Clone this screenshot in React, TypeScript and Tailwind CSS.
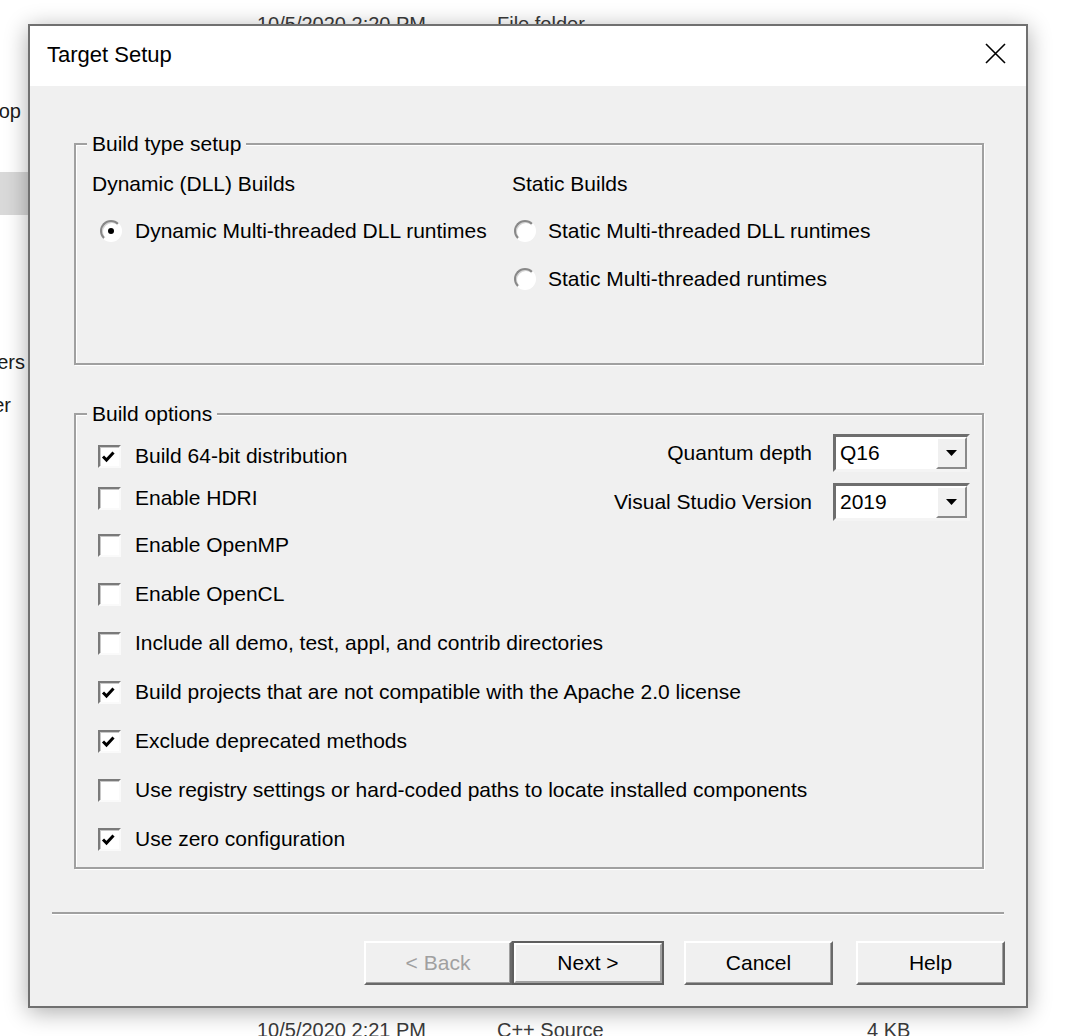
import React from 'react';

const sans = "font-['Liberation_Sans',Arial,sans-serif]";

function Radio({ checked }: { checked?: boolean }) {
  return (
    <span className="flex h-[22px] w-[22px] shrink-0 items-center justify-center rounded-full border-2 border-t-[#888888] border-l-[#888888] border-r-white border-b-white bg-white shadow-[inset_1px_1px_0_#d4d4d4]">
      {checked && <span className="h-[6px] w-[6px] rounded-full bg-black" />}
    </span>
  );
}

function Checkbox({ checked }: { checked?: boolean }) {
  return (
    <span className="flex h-[23px] w-[23px] shrink-0 items-center justify-center border-2 border-t-[#7a7a7a] border-l-[#7a7a7a] border-r-[#fafafa] border-b-[#fafafa] bg-white shadow-[inset_1px_1px_0_#c8c8c8]">
      {checked && (
        <svg width="15" height="13" viewBox="0 0 15 13" className="-ml-[2px]">
          <path d="M2 6.5 L5.5 10 L12.5 2.5" stroke="#000" strokeWidth="3" fill="none" />
        </svg>
      )}
    </span>
  );
}

function Group({ title, className, children }: { title: string; className: string; children: React.ReactNode }) {
  return (
    <div className={`relative border-2 border-[#a0a0a0] shadow-[1px_1px_0_#fff,inset_1px_1px_0_#fff] ${className}`}>
      <span className="absolute -top-[13px] left-[11px] bg-[#f0f0f0] px-[5px] leading-[24px]">{title}</span>
      {children}
    </div>
  );
}

function Select({ value }: { value: string }) {
  return (
    <div className="flex h-[38px] w-[137px] border-[3px] border-t-[#6e6e6e] border-l-[#6e6e6e] border-r-[#f4f4f4] border-b-[#f4f4f4] bg-white">
      <span className="flex-1 pl-[4px] leading-[32px]">{value}</span>
      <span className="flex w-[31px] items-center justify-center border-2 border-t-white border-l-white border-r-[#8a8a8a] border-b-[#8a8a8a] bg-[#f0f0f0]">
        <svg width="11" height="6" viewBox="0 0 11 6">
          <path d="M0 0 H11 L5.5 6 Z" fill="#000" />
        </svg>
      </span>
    </div>
  );
}

export default function App() {
  const options = [
    { label: 'Build 64-bit distribution', checked: true },
    { label: 'Enable HDRI', checked: false },
    { label: 'Enable OpenMP', checked: false },
    { label: 'Enable OpenCL', checked: false },
    { label: 'Include all demo, test, appl, and contrib directories', checked: false },
    { label: 'Build projects that are not compatible with the Apache 2.0 license', checked: true },
    { label: 'Exclude deprecated methods', checked: true },
    { label: 'Use registry settings or hard-coded paths to locate installed components', checked: false },
    { label: 'Use zero configuration', checked: true },
  ];

  const row = (o: { label: string; checked: boolean }) => (
    <div key={o.label} className="flex h-[24px] items-center gap-[14px]">
      <Checkbox checked={o.checked} />
      <span className="whitespace-nowrap leading-[24px]">{o.label}</span>
    </div>
  );

  return (
    <div className={`relative h-[1036px] w-[1074px] overflow-hidden bg-white text-[21px] text-black ${sans}`}>
      {/* Explorer window behind the dialog */}
      <div className="absolute left-0 top-[13px] flex text-[20px] leading-[22px] text-[#3a3a3a]">
        <span className="ml-[257px] w-[240px]">10/5/2020 2:20 PM</span>
        <span>File folder</span>
      </div>
      <div className="absolute left-0 top-[1019px] flex text-[20px] leading-[22px] text-[#3a3a3a]">
        <span className="ml-[257px] w-[240px]">10/5/2020 2:21 PM</span>
        <span className="w-[370px]">C++ Source</span>
        <span>4 KB</span>
      </div>
      <div className="absolute left-0 top-0 flex h-full w-[28px] flex-col overflow-hidden text-[20px] leading-[22px] text-[#1a1a1a]">
        <div className="mt-[100px] flex justify-end pr-[7px] whitespace-nowrap">Desktop</div>
        <div className="mt-[50px] h-[43px] w-full bg-[#d9d9d9]" />
        <div className="mt-[136px] flex justify-end pr-[3px] whitespace-nowrap">Users</div>
        <div className="mt-[21px] flex justify-end pr-[17px] whitespace-nowrap">Server</div>
      </div>

      {/* Dialog */}
      <div className="absolute left-[28px] top-[24px] flex h-[984px] w-[1000px] flex-col border-2 border-[#707070] bg-[#f0f0f0] shadow-[0_4px_22px_rgba(0,0,0,0.33)]">
        <div className="flex h-[60px] items-center justify-between bg-white pl-[17px] pr-[20px]">
          <span className="pb-[3px] text-[22px]">Target Setup</span>
          <svg width="21" height="21" viewBox="0 0 21 21" className="mb-[5px]">
            <path d="M1 1 L20 20 M20 1 L1 20" stroke="#000" strokeWidth="1.6" />
          </svg>
        </div>

        <div className="flex flex-1 flex-col pt-[57px]">
          <Group title="Build type setup" className="ml-[44px] h-[222px] w-[910px]">
            <div className="flex pl-[16px] pt-[15px]">
              <div className="flex w-[420px] flex-col">
                <div className="flex h-[47px] items-center">Dynamic (DLL) Builds</div>
                <div className="flex h-[48px] items-center gap-[13px] pl-[8px]">
                  <Radio checked />
                  <span>Dynamic Multi-threaded DLL runtimes</span>
                </div>
              </div>
              <div className="flex flex-col">
                <div className="flex h-[47px] items-center">Static Builds</div>
                <div className="flex h-[48px] items-center gap-[12px] pl-[2px]">
                  <Radio />
                  <span>Static Multi-threaded DLL runtimes</span>
                </div>
                <div className="flex h-[48px] items-center gap-[12px] pl-[2px]">
                  <Radio />
                  <span>Static Multi-threaded runtimes</span>
                </div>
              </div>
            </div>
          </Group>

          <Group title="Build options" className="ml-[44px] mt-[48px] h-[456px] w-[910px]">
            <div className="grid">
              <div className="col-start-1 row-start-1 flex flex-col pl-[22px] pt-[29px]">
                <div className="flex flex-col gap-[18px]">{options.slice(0, 2).map(row)}</div>
                <div className="mt-[23px] flex flex-col gap-[25px]">{options.slice(2).map(row)}</div>
              </div>
              <div className="col-start-1 row-start-1 grid grid-cols-[auto_137px] items-center gap-x-[21px] gap-y-[11px] self-start justify-self-end pr-[12px] pt-[19px]">
                <span className="whitespace-nowrap text-right">Quantum depth</span>
                <Select value="Q16" />
                <span className="whitespace-nowrap text-right">Visual Studio Version</span>
                <Select value="2019" />
              </div>
            </div>
          </Group>

          <div className="mx-[22px] mt-[43px] h-[2px] bg-[#a0a0a0] shadow-[0_1px_0_#fff]" />

          <div className="mt-[27px] flex justify-end pr-[21px]">
            <button className="h-[44px] w-[148px] border-2 border-t-white border-l-white border-r-[#696969] border-b-[#696969] bg-[#f0f0f0] text-[#a0a0a0] shadow-[inset_-1px_-1px_0_#a0a0a0]">
              &lt; Back
            </button>
            <button className="h-[44px] w-[152px] border-2 border-[#5f5f5f] bg-[#f0f0f0]">
              <span className="flex h-full w-full items-center justify-center border-2 border-t-white border-l-white border-r-[#a0a0a0] border-b-[#a0a0a0]">
                Next &gt;
              </span>
            </button>
            <button className="ml-[20px] h-[44px] w-[149px] border-2 border-t-white border-l-white border-r-[#696969] border-b-[#696969] bg-[#f0f0f0] shadow-[inset_-1px_-1px_0_#a0a0a0]">
              Cancel
            </button>
            <button className="ml-[23px] h-[44px] w-[149px] border-2 border-t-white border-l-white border-r-[#696969] border-b-[#696969] bg-[#f0f0f0] shadow-[inset_-1px_-1px_0_#a0a0a0]">
              Help
            </button>
          </div>
        </div>
      </div>
    </div>
  );
}
